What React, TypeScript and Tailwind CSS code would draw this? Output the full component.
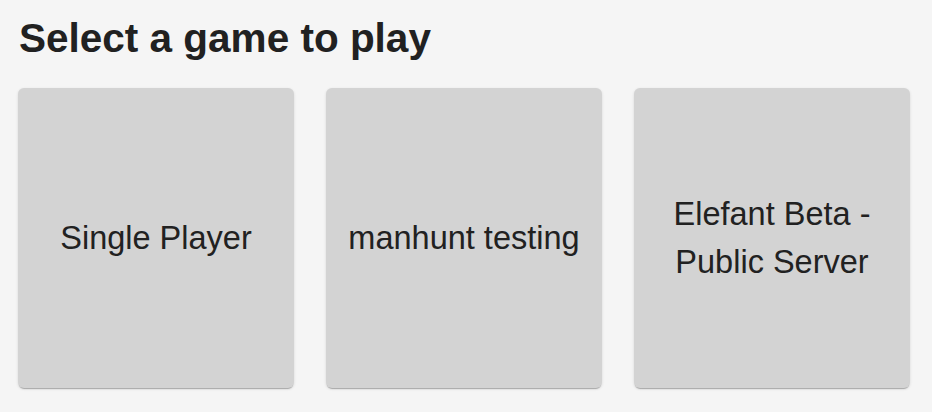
export default function App() {
  const games = [
    { id: "single", name: "Single Player" },
    { id: "manhunt", name: "manhunt testing" },
    { id: "elefant", name: "Elefant Beta - Public Server" },
  ];

  return (
    <div className="min-h-screen w-full bg-[#f5f5f5] px-[18px] pt-[16px] font-['Liberation_Sans',Arial,sans-serif] text-[#212121]">
      <h1 className="pl-px text-[40.5px] font-bold leading-[45px]">Select a game to play</h1>

      {/* Game cards */}
      <div className="mt-[27px] flex gap-[32px]">
        {games.map((game) => (
          <button
            key={game.id}
            className="flex h-[300px] w-[276px] items-center justify-center rounded-[6px] bg-[#d3d3d3] px-4 text-center text-[32.5px] leading-[48px] shadow-[0_2px_1px_-1px_rgba(0,0,0,0.25),0_1px_3px_0_rgba(0,0,0,0.12)]"
          >
            {game.name}
          </button>
        ))}
      </div>
    </div>
  );
}
